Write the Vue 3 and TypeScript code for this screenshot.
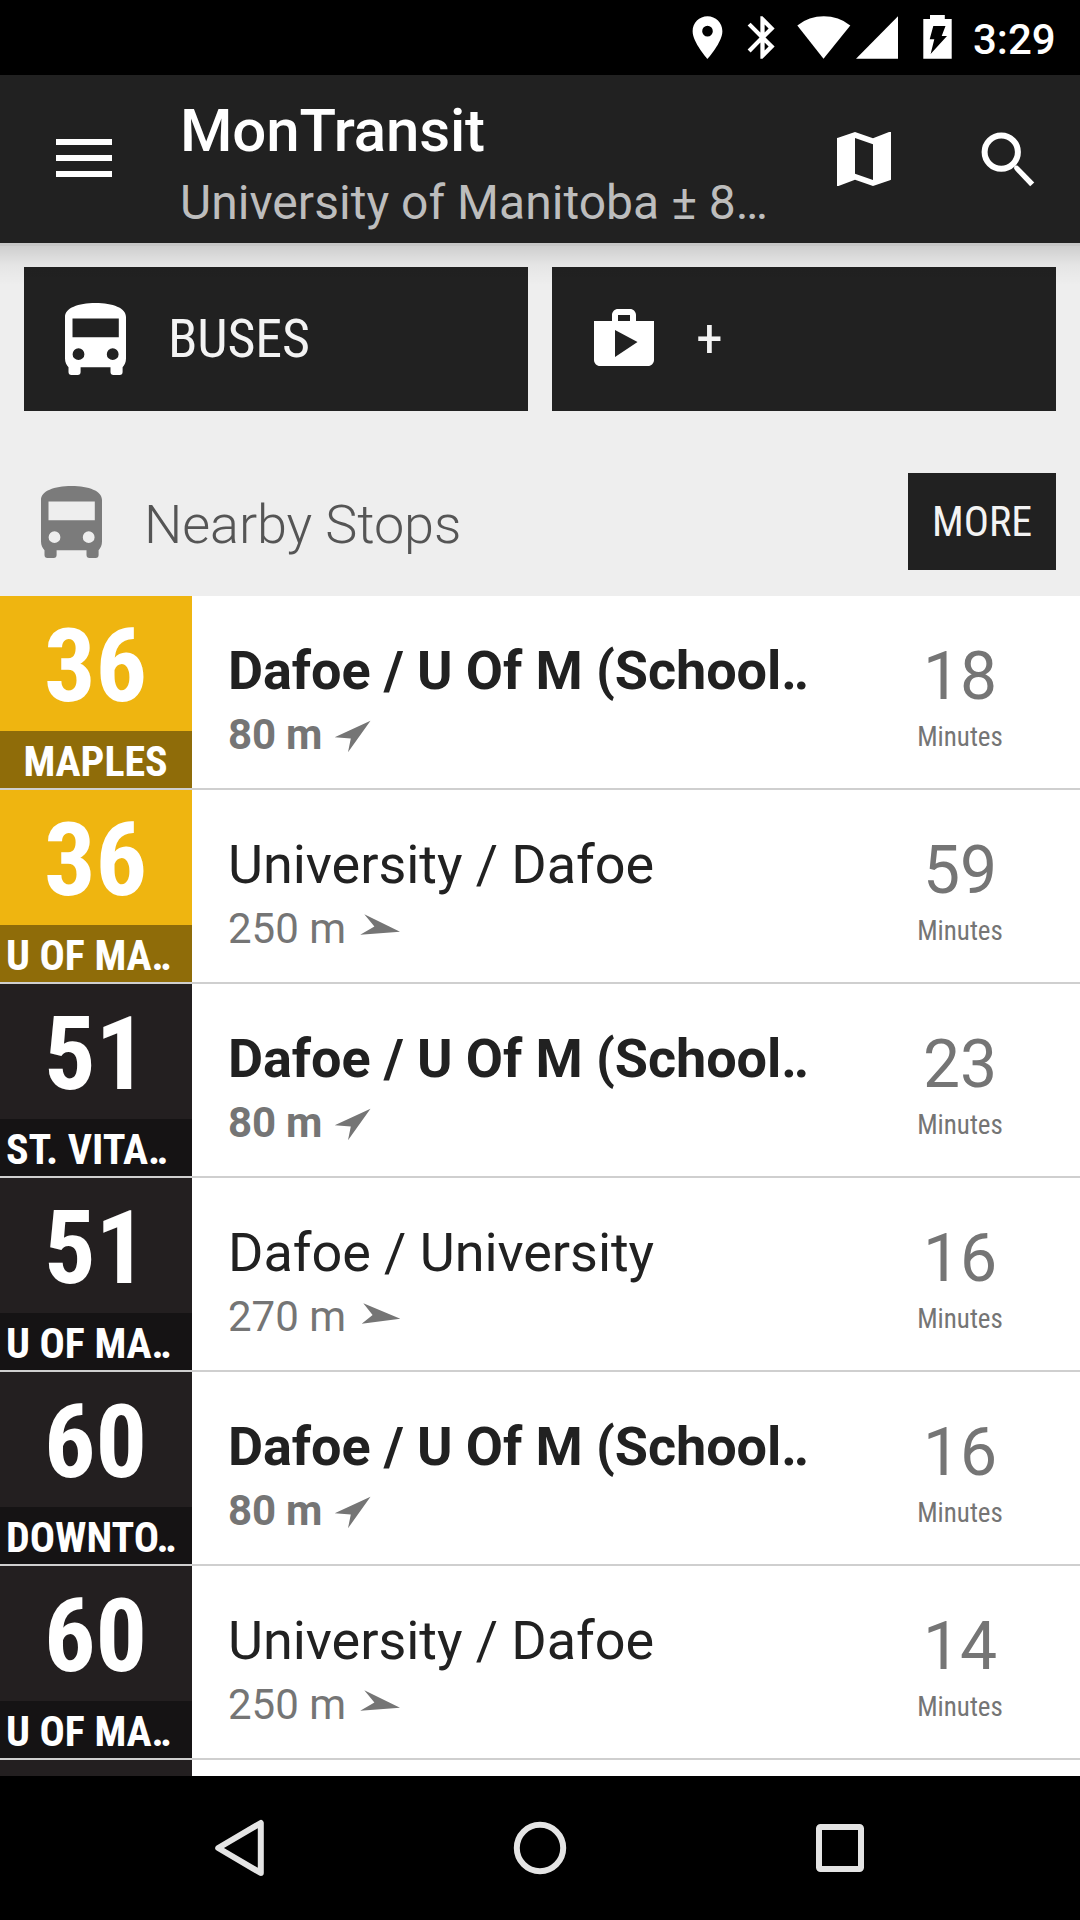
<script setup lang="ts">
interface Stop {
  route: string
  headsign: string
  cut: boolean
  gold: boolean
  name: string
  distance: string
  near: boolean
  arrow: 'ne' | 'e1' | 'e2'
  minutes: string
}

const arrows: Record<Stop['arrow'], string> = {
  ne: 'M43.5 4.7L7.7 21.3L23.8 22.5L21 36.3Z',
  e1: 'M46 21.7L10.3 4.3L20.4 16.5L6.2 24.7Z',
  e2: 'M46.3 20.7L9.3 5.3L18.6 17L7.7 25.7Z',
}

const stops: Stop[] = [
  { route: '36', headsign: 'MAPLES', cut: false, gold: true, name: 'Dafoe / U Of M (School‥', distance: '80 m', near: true, arrow: 'ne', minutes: '18' },
  { route: '36', headsign: 'U OF MA‥', cut: true, gold: true, name: 'University / Dafoe', distance: '250 m', near: false, arrow: 'e1', minutes: '59' },
  { route: '51', headsign: 'ST. VITA‥', cut: true, gold: false, name: 'Dafoe / U Of M (School‥', distance: '80 m', near: true, arrow: 'ne', minutes: '23' },
  { route: '51', headsign: 'U OF MA‥', cut: true, gold: false, name: 'Dafoe / University', distance: '270 m', near: false, arrow: 'e2', minutes: '16' },
  { route: '60', headsign: 'DOWNTO‥', cut: true, gold: false, name: 'Dafoe / U Of M (School‥', distance: '80 m', near: true, arrow: 'ne', minutes: '16' },
  { route: '60', headsign: 'U OF MA‥', cut: true, gold: false, name: 'University / Dafoe', distance: '250 m', near: false, arrow: 'e1', minutes: '14' },
]

const busPath =
  'M5 14C5 5 18 0 35.5 0S66 5 66 14V55.5C66 59.5 64.5 62 62.6 64.3V69A3 3 0 0 1 59.6 72H53.5A3 3 0 0 1 50.5 69V64.3H20.6V69A3 3 0 0 1 17.6 72H11.5A3 3 0 0 1 8.5 69V64.3C6.5 62 5 59.5 5 55.5Z' +
  'M12.5 15.5V34.3H58.8V15.5Z' +
  'M12.6 51.2a5.9 5.9 0 1 0 11.8 0a5.9 5.9 0 1 0 -11.8 0Z' +
  'M46.8 51.2a5.9 5.9 0 1 0 11.8 0a5.9 5.9 0 1 0 -11.8 0Z'
</script>

<template>
  <div class="screen">
    <div class="status">
      <svg class="pin" viewBox="0 0 24 24"><path d="M12 2C8.13 2 5 5.13 5 9c0 5.25 7 13 7 13s7-7.75 7-13c0-3.87-3.13-7-7-7zm0 9.5a2.5 2.5 0 0 1 0-5 2.5 2.5 0 0 1 0 5z" /></svg>
      <svg class="bt" viewBox="0 0 24 24"><path d="M17.71 7.71L12 2h-1v7.59L6.41 5 5 6.41 10.59 12 5 17.59 6.41 19 11 14.41V22h1l5.71-5.71-4.3-4.29 4.3-4.29zM13 5.83l1.88 1.88L13 9.59V5.83zm1.88 10.46L13 18.17v-3.76l1.88 1.88z" /></svg>
      <svg class="wifi" viewBox="0 0 54 43"><path d="M0.3 9.4A43 43 0 0 1 53.3 9.4L26.5 42.7Z" /></svg>
      <svg class="signal" viewBox="0 0 42 43"><path d="M42 0.3V42.7H0Z" /></svg>
      <svg class="battery" viewBox="0 0 29 44"><path fill-rule="evenodd" d="M0.3 4H7V0H21.8V4H28.7V43.7H0.3ZM10.3 11L6.7 24.3H11.3L7.6 39L24 21H18.7L22.5 11Z" /></svg>
      <span class="clock">3:29</span>
    </div>

    <header class="toolbar">
      <div class="menu"><i /><i /><i /></div>
      <div class="titles">
        <div class="title">MonTransit</div>
        <div class="subtitle">University of Manitoba ± 8…</div>
      </div>
      <svg class="action" viewBox="0 0 24 24"><path d="M20.5 3l-.16.03L15 5.1 9 3 3.36 4.9 3 5v16l.5-.03L9 18.9l6 2.1 5.64-1.9.36-.2V3zM15 19l-6-2.11V5l6 2.11V19z" /></svg>
      <svg class="action search" viewBox="0 0 24 24">
        <circle cx="9.75" cy="9.7" r="5.55" fill="none" stroke="#fff" stroke-width="2" />
        <path d="M14.05 15.1V14.6L14.5 14.15H15.1L15.6 14.55L20.75 19.8L19.4 21.1L14.3 15.7Z" />
      </svg>
    </header>

    <main class="content">
      <div class="shadow" />
      <div class="tiles">
        <div class="tile">
          <svg class="icon" viewBox="0 0 72 72"><path fill-rule="evenodd" :d="busPath" /></svg>
          <span class="cond tile-text">BUSES</span>
        </div>
        <div class="tile">
          <svg class="icon" viewBox="0 0 24 24"><path d="M16 6V4c0-1.11-.89-2-2-2h-4c-1.11 0-2 .89-2 2v2H2v13c0 1.11.89 2 2 2h16c1.11 0 2-.89 2-2V6h-6zm-6-2h4v2h-4V4zM9 18V9l7.5 4L9 18z" /></svg>
          <span class="cond tile-text">+</span>
        </div>
      </div>

      <div class="section">
        <svg class="icon grey" viewBox="0 0 72 72"><path fill-rule="evenodd" :d="busPath" /></svg>
        <span class="section-title">Nearby Stops</span>
        <button class="more"><span class="cond">MORE</span></button>
      </div>

      <div class="list">
        <div v-for="(s, i) in stops" :key="i" class="row" :class="{ near: s.near }">
          <div class="badge" :class="{ gold: s.gold }">
            <div class="route"><span class="cond">{{ s.route }}</span></div>
            <div class="headsign" :class="{ cut: s.cut }"><span class="cond">{{ s.headsign }}</span></div>
          </div>
          <div class="info">
            <div class="name">{{ s.name }}</div>
            <div class="distance">
              <span>{{ s.distance }}</span>
              <svg class="arrow" viewBox="0 0 52 42"><path :d="arrows[s.arrow]" /></svg>
            </div>
          </div>
          <div class="eta">
            <div class="eta-number">{{ s.minutes }}</div>
            <div class="eta-unit"><span class="cond">Minutes</span></div>
          </div>
        </div>
        <div class="row last"><div class="badge" /></div>
      </div>
    </main>

    <nav class="nav">
      <svg viewBox="0 0 72 72"><path d="M56.8 11V61L14.2 36Z" stroke-linejoin="round" /></svg>
      <svg viewBox="0 0 72 72"><circle cx="36" cy="36" r="23.2" /></svg>
      <svg viewBox="0 0 72 72"><rect x="15" y="15" width="42" height="42" rx="1.5" /></svg>
    </nav>
  </div>
</template>

<style>
body {
  background: #000;
}
</style>

<style scoped>
.screen {
  width: 1080px;
  height: 1920px;
  overflow: hidden;
  display: flex;
  flex-direction: column;
  background: #eee;
  font-family: Roboto, "Noto Sans", sans-serif;
  white-space: nowrap;
}
svg {
  display: block;
  flex: none;
}
.cond {
  display: inline-block;
  font-family: "Roboto Condensed", Roboto, sans-serif;
  font-stretch: 75%;
}
.status {
  flex: none;
  height: 75px;
  box-sizing: border-box;
  padding: 12px 0 0 682px;
  background: #000;
  fill: #fff;
  display: flex;
  align-items: flex-start;
}
.pin { width: 51px; height: 51px; }
.bt { width: 51px; height: 51px; margin-left: 4px; }
.wifi { width: 54px; height: 43px; margin: 4px 0 0 9px; }
.signal { width: 42px; height: 43px; margin: 4px 0 0 5px; }
.battery { width: 29px; height: 44px; margin: 3px 0 0 25px; }
.clock {
  margin: 3px 0 0 21px;
  color: #fff;
  font-size: 42px;
  line-height: 49px;
  font-weight: 500;
}
.toolbar {
  flex: none;
  height: 168px;
  display: flex;
  align-items: flex-start;
  background: #212121;
  fill: #fff;
}
.menu {
  display: flex;
  flex-direction: column;
  gap: 10px;
  width: 56px;
  margin: 64px 68px 0 56px;
}
.menu i {
  height: 6px;
  background: #fff;
}
.titles {
  width: 648px;
  padding-top: 20px;
}
.title {
  color: #fff;
  font-size: 60px;
  line-height: 71px;
  font-weight: 500;
  letter-spacing: -0.15px;
}
.subtitle {
  margin-top: 8px;
  color: #bdbdbd;
  font-size: 48px;
  line-height: 57px;
  letter-spacing: 0.03px;
}
.action {
  width: 72px;
  height: 72px;
  margin-top: 48px;
}
.search {
  margin-left: 72px;
}
.content {
  position: relative;
  flex: none;
  height: 1533px;
  overflow: hidden;
}
.shadow {
  position: absolute;
  inset: 0 0 auto 0;
  height: 42px;
  background: linear-gradient(to bottom, rgba(0, 0, 0, 0.17) 0, rgba(0, 0, 0, 0.17) 3px, rgba(0, 0, 0, 0.135) 3px, rgba(0, 0, 0, 0.04) 22px, transparent 42px);
}
.tiles {
  display: flex;
  gap: 24px;
  padding: 24px 24px 0;
}
.tile {
  flex: 1;
  height: 144px;
  box-sizing: border-box;
  padding-left: 36px;
  display: flex;
  align-items: center;
  gap: 36px;
  background: #212121;
  fill: #fff;
}
.icon {
  width: 72px;
  height: 72px;
}
.tile-text {
  margin-bottom: 1px;
  color: #f3f3f3;
  font-size: 54px;
  line-height: 63px;
  letter-spacing: -0.15px;
}
.section {
  height: 185px;
  box-sizing: border-box;
  padding: 62px 24px 0 36px;
  display: flex;
  align-items: flex-start;
}
.grey {
  margin-top: 13px;
  fill: #7b7b7b;
}
.section-title {
  flex: 1;
  margin: 20px 0 0 36px;
  color: #555;
  font-size: 54px;
  line-height: 63px;
  font-weight: 300;
  letter-spacing: -0.1px;
}
.more {
  width: 148px;
  height: 97px;
  padding: 0;
  border: 0;
  background: #212121;
  color: #f3f3f3;
  font-size: 42px;
  line-height: 49px;
}
.row {
  height: 192px;
  display: flex;
  background: #fff;
  border-bottom: 2px solid #cfcfcf;
}
.badge {
  width: 192px;
  background: #231f20;
  color: #fff;
  font-weight: 700;
}
.gold {
  background: #efb510;
}
.route {
  height: 125px;
  padding: 10px 1px 0 0;
  text-align: center;
  font-size: 102px;
  line-height: 120px;
}
.headsign {
  height: 51px;
  padding: 6px 7px 0 6px;
  text-align: center;
  background: #151314;
  font-size: 42px;
  line-height: 49px;
  letter-spacing: -0.05px;
}
.gold .headsign {
  background: #8f6c09;
}
.cut {
  text-align: left;
}
.info {
  flex: 1;
  padding: 43px 0 0 36px;
  color: #212121;
}
.name {
  font-size: 54px;
  line-height: 63px;
  letter-spacing: -0.05px;
}
.near .name {
  letter-spacing: -0.1px;
}
.distance {
  display: flex;
  margin-top: 8px;
  color: #757575;
  font-size: 42px;
  line-height: 49px;
}
.near .distance {
  letter-spacing: -0.2px;
}
.near .info {
  font-weight: 700;
}
.arrow {
  width: 52px;
  height: 42px;
  margin: 6px 0 0 8px;
  fill: #757575;
}
.near .arrow {
  margin-left: 5px;
}
.eta {
  width: 240px;
  padding-top: 42px;
  text-align: center;
  color: #757575;
}
.eta-number {
  font-size: 66px;
  line-height: 77px;
}
.eta-unit {
  margin-top: 6px;
  font-size: 27px;
  line-height: 32px;
}
.nav {
  flex: none;
  height: 144px;
  display: flex;
  align-items: center;
  justify-content: center;
  gap: 228px;
  background: #000;
  fill: none;
  stroke: #e4e4e4;
  stroke-width: 6px;
}
.nav svg {
  width: 72px;
  height: 72px;
}
</style>
